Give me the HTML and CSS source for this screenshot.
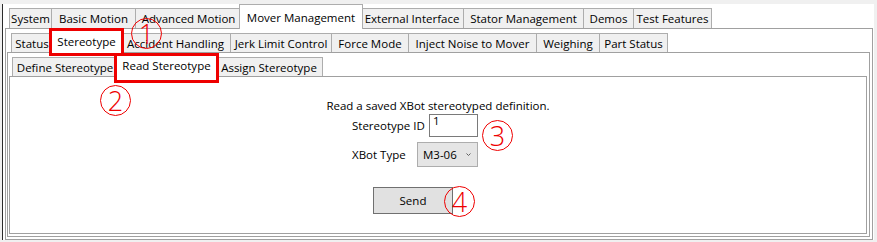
FILE: index.html
```html
<!DOCTYPE html>
<html lang="en">
<head>
  <meta charset="UTF-8" />
  <title>Mover Management - Read Stereotype</title>
  <link rel="stylesheet" href="styles.css">
</head>
<body>
  <div class="window">
    <div class="tabctl">
      <!-- top level tabs -->
      <div class="tabstrip strip-main">
        <span class="tab">System</span>
        <span class="tab">Basic Motion</span>
        <span class="tab">Advanced Motion</span>
        <span class="tab active">Mover Management</span>
        <span class="tab">External Interface</span>
        <span class="tab">Stator Management</span>
        <span class="tab">Demos</span>
        <span class="tab">Test Features</span>
      </div>
      <div class="panel">
        <div class="tabctl nested">
          <!-- mover management tabs -->
          <div class="tabstrip strip-mover">
            <span class="tab">Status</span>
            <span class="tab active">Stereotype</span>
            <span class="tab">Accident Handling</span>
            <span class="tab">Jerk Limit Control</span>
            <span class="tab">Force Mode</span>
            <span class="tab">Inject Noise to Mover</span>
            <span class="tab">Weighing</span>
            <span class="tab">Part Status</span>
          </div>
          <div class="panel">
            <div class="tabctl nested">
              <!-- stereotype tabs -->
              <div class="tabstrip strip-stereo">
                <span class="tab">Define Stereotype</span>
                <span class="tab active">Read Stereotype</span>
                <span class="tab">Assign Stereotype</span>
              </div>
              <div class="panel page">
                <p class="hint">Read a saved XBot stereotyped definition.</p>
                <div class="form">
                  <div class="field">
                    <label for="stereo-id">Stereotype ID</label>
                    <div class="textbox" id="stereo-id">1</div>
                  </div>
                  <div class="field">
                    <label>XBot Type</label>
                    <div class="combo">
                      <span>M3-06</span>
                      <svg width="5" height="3" viewBox="0 0 5 3"><polyline points="0.5,0.5 2.5,2.5 4.5,0.5" fill="none" stroke="#606060" stroke-width="1"/></svg>
                    </div>
                  </div>
                  <button class="send">Send</button>
                </div>
              </div>
            </div>
          </div>
        </div>
      </div>
    </div>
  </div>

  <!-- annotation marks -->
  <div class="mark box-mover"></div>
  <div class="mark box-stereo"></div>
  <span class="step step-1">1</span>
  <span class="step step-2">2</span>
  <span class="step step-3">3</span>
  <span class="step step-4">4</span>
</body>
</html>
```

FILE: styles.css
```css
:root {
  --chrome: #f0f0f0;
  --line: #a0a0a0;
  --tab-line: #adadad;
  --mark: #ee0000;
}

* {
  box-sizing: border-box;
}

body {
  margin: 0;
  width: 877px;
  height: 242px;
  overflow: hidden;
  position: relative;
  background: var(--chrome);
  font-family: 'Open Sans', 'Noto Sans', sans-serif;
  font-size: 11.5px;
  color: #000;
}

.window {
  display: flex;
  flex-direction: column;
  width: 872px;
  height: 236px;
  margin: 4px 0 0 2px;
  padding: 0 1px 0 2px;
  border-left: 1px solid #2b2b2b;
  background: #fff;
}

.tabctl {
  flex: 1;
  display: flex;
  flex-direction: column;
}

.tabctl.nested {
  padding: 0 2px 2px 1px;
}

.tabstrip {
  display: flex;
  align-items: flex-end;
  height: 24px;
  padding-left: 4px;
}

.nested .tabstrip {
  height: 23px;
}

.strip-stereo {
  padding-left: 3px;
}

.tab {
  display: flex;
  align-items: center;
  justify-content: center;
  height: 20px;
  margin-left: -1px;
  border: 1px solid var(--tab-line);
  border-bottom: none;
  background: var(--chrome);
  white-space: nowrap;
}

.tab:first-child {
  margin-left: 0;
}

.tab.active {
  position: relative;
  z-index: 1;
  height: 25px;
  margin: 0 -2px -1px -3px;
  background: #fff;
}

.nested .tab {
  height: 19px;
}

.nested .tab.active {
  height: 24px;
}

/* tab widths */
.strip-main .tab:nth-child(1) { width: 43px; }
.strip-main .tab:nth-child(2) { width: 85px; }
.strip-main .tab:nth-child(3) { width: 107px; }
.strip-main .tab:nth-child(4) { width: 124px; }
.strip-main .tab:nth-child(5) { width: 104px; }
.strip-main .tab:nth-child(6) { width: 121px; }
.strip-main .tab:nth-child(7) { width: 51px; }
.strip-main .tab:nth-child(8) { width: 79px; }

.strip-mover .tab:nth-child(1) { width: 42px; }
.strip-mover .tab:nth-child(2) { width: 73px; }
.strip-mover .tab:nth-child(3) { width: 111px; }
.strip-mover .tab:nth-child(4) { width: 102px; }
.strip-mover .tab:nth-child(5) { width: 78px; }
.strip-mover .tab:nth-child(6) { width: 129px; }
.strip-mover .tab:nth-child(7) { width: 64px; }
.strip-mover .tab:nth-child(8) { width: 69px; }

.strip-stereo .tab:nth-child(1) { width: 106px; }
.strip-stereo .tab:nth-child(2) { width: 103px; }
.strip-stereo .tab:nth-child(3) { width: 108px; }

.panel {
  flex: 1;
  display: flex;
  border: 1px solid var(--line);
  background: #fff;
}

.page {
  flex-direction: column;
  align-items: center;
  padding-top: 21px;
}

.hint {
  margin: 0;
  line-height: 16px;
}

.form {
  align-self: flex-start;
  display: flex;
  flex-direction: column;
  width: 126px;
  margin-left: 342px;
}

.field {
  display: flex;
  align-items: center;
  justify-content: space-between;
}

.field + .field {
  margin-top: 5px;
}

.textbox {
  width: 49px;
  height: 23px;
  padding: 0 3px;
  border: 1px solid #7a7a7a;
  line-height: 12px;
  background: #fff;
}

.combo {
  display: flex;
  align-items: center;
  justify-content: space-between;
  width: 61px;
  height: 25px;
  padding: 0 6px 0 5px;
  border: 1px solid var(--tab-line);
  background: #e5e5e5;
}

.send {
  width: 80px;
  height: 27px;
  margin: 20px 0 0 21px;
  padding: 0;
  border: 1px solid #707070;
  background: #e1e1e1;
  font: inherit;
  color: #000;
}

/* red annotations drawn over the screen */
.mark {
  position: absolute;
  z-index: 5;
  border: 3px solid var(--mark);
}

.box-mover {
  left: 49px;
  top: 28px;
  width: 75px;
  height: 28px;
}

.box-stereo {
  left: 114px;
  top: 53px;
  width: 105px;
  height: 30px;
}

.step {
  position: absolute;
  z-index: 5;
  width: 31px;
  height: 31px;
  border: 1.5px solid var(--mark);
  border-radius: 50%;
  display: flex;
  align-items: center;
  justify-content: center;
  color: var(--mark);
  font-size: 27px;
  font-weight: 300;
  line-height: 1;
}

.step-1 { left: 131px; top: 18px; }
.step-2 { left: 100px; top: 85px; }
.step-3 { left: 482px; top: 120px; }
.step-4 { left: 444px; top: 186px; }
```
